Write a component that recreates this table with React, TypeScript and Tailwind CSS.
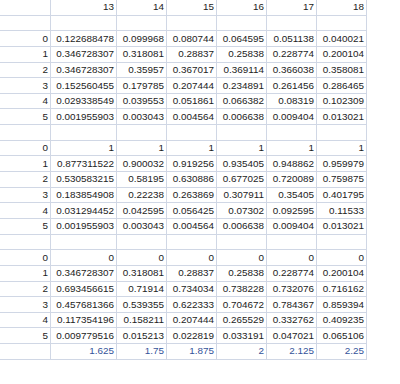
import React from "react";

const header = ["", "13", "14", "15", "16", "17", "18"];

const block1 = [
  ["0", "0.122688478", "0.099968", "0.080744", "0.064595", "0.051138", "0.040021"],
  ["1", "0.346728307", "0.318081", "0.28837", "0.25838", "0.228774", "0.200104"],
  ["2", "0.346728307", "0.35957", "0.367017", "0.369114", "0.366038", "0.358081"],
  ["3", "0.152560455", "0.179785", "0.207444", "0.234891", "0.261456", "0.286465"],
  ["4", "0.029338549", "0.039553", "0.051861", "0.066382", "0.08319", "0.102309"],
  ["5", "0.001955903", "0.003043", "0.004564", "0.006638", "0.009404", "0.013021"],
];

const block2 = [
  ["0", "1", "1", "1", "1", "1", "1"],
  ["1", "0.877311522", "0.900032", "0.919256", "0.935405", "0.948862", "0.959979"],
  ["2", "0.530583215", "0.58195", "0.630886", "0.677025", "0.720089", "0.759875"],
  ["3", "0.183854908", "0.22238", "0.263869", "0.307911", "0.35405", "0.401795"],
  ["4", "0.031294452", "0.042595", "0.056425", "0.07302", "0.092595", "0.11533"],
  ["5", "0.001955903", "0.003043", "0.004564", "0.006638", "0.009404", "0.013021"],
];

const block3 = [
  ["0", "0", "0", "0", "0", "0", "0"],
  ["1", "0.346728307", "0.318081", "0.28837", "0.25838", "0.228774", "0.200104"],
  ["2", "0.693456615", "0.71914", "0.734034", "0.738228", "0.732076", "0.716162"],
  ["3", "0.457681366", "0.539355", "0.622333", "0.704672", "0.784367", "0.859394"],
  ["4", "0.117354196", "0.158211", "0.207444", "0.265529", "0.332762", "0.409235"],
  ["5", "0.009779516", "0.015213", "0.022819", "0.033191", "0.047021", "0.065106"],
];

const empty = ["", "", "", "", "", "", ""];
const sums = ["", "1.625", "1.75", "1.875", "2", "2.125", "2.25"];

type Row = { cells: string[]; total?: boolean };

const rows: Row[] = [
  { cells: header },
  { cells: empty },
  ...block1.map((cells) => ({ cells })),
  { cells: empty },
  ...block2.map((cells) => ({ cells })),
  { cells: empty },
  ...block3.map((cells) => ({ cells })),
  { cells: sums, total: true },
];

export default function App() {
  return (
    <div className="w-[400px] h-[384px] bg-white overflow-hidden font-['Liberation_Sans',Arial,sans-serif] text-[9.9px]">
      <div className="grid grid-cols-[51px_66px_50px_50px_50px_50px_50px] auto-rows-[15.65px] w-[367px]">
        {rows.map((row, r) =>
          row.cells.map((value, c) => (
            <div
              key={`${r}-${c}`}
              className={`flex items-center justify-end pr-[2px] border-r border-b border-[#d0d7e5] leading-none whitespace-nowrap ${
                row.total ? "text-[#34539a]" : "text-[#1c1c1c]"
              }`}
            >
              {value}
            </div>
          ))
        )}
      </div>
    </div>
  );
}
